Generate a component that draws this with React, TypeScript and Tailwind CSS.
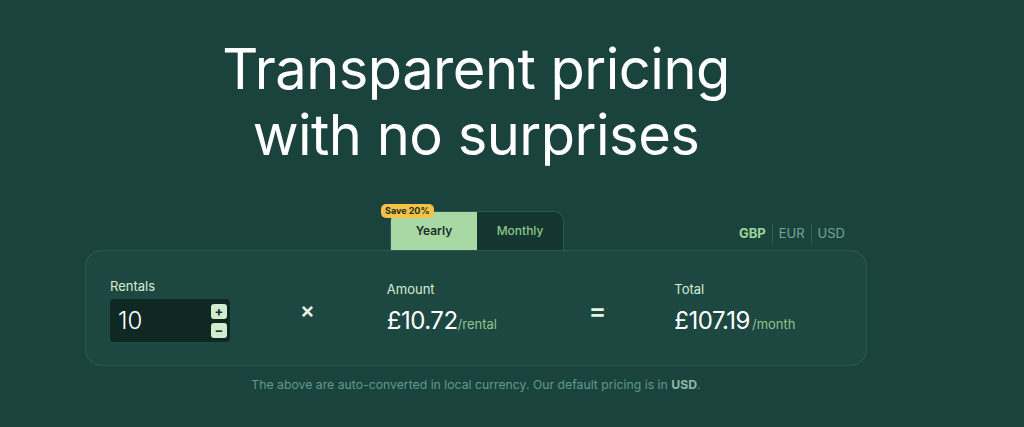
import { useState } from "react";

const currencies = ["GBP", "EUR", "USD"];

export default function App() {
  const [rentals, setRentals] = useState(10);
  const [plan, setPlan] = useState<"yearly" | "monthly">("yearly");
  const [currency, setCurrency] = useState("GBP");

  const rate = 10.72;
  const total = 107.19;

  return (
    <div
      className="min-h-[427px] w-full bg-[#1b433e] text-white"
      style={{ fontFamily: "Inter, 'Noto Sans', sans-serif" }}
    >
      <div className="flex w-[952px] flex-col items-center">
        <h1 className="pt-[36px] text-center text-[56px] font-normal leading-[66px] tracking-[-0.5px] text-white">
          Transparent pricing
          <br />
          with no surprises
        </h1>

        <div className="mt-[43px] w-[782px]">
          {/* plan toggle + currency */}
          <div className="relative flex h-[39px] items-end">
            <div className="ml-[305px] flex h-[39px] overflow-hidden rounded-t-[10px] border border-b-0 border-[#2b5a53]">
              <button
                onClick={() => setPlan("yearly")}
                className={`w-[86px] text-[12px] font-semibold ${
                  plan === "yearly" ? "bg-[#a8d8a4] text-[#1a2e2a]" : "bg-[#143631] text-[#8fc48a]"
                }`}
              >
                Yearly
              </button>
              <button
                onClick={() => setPlan("monthly")}
                className={`w-[86px] text-[12px] font-medium ${
                  plan === "monthly" ? "bg-[#a8d8a4] text-[#1a2e2a]" : "bg-[#143631] text-[#8fc48a]"
                }`}
              >
                Monthly
              </button>
            </div>
            <span className="absolute left-[296px] top-[-7px] rounded-[5px] bg-[#f4c244] px-[4px] py-[1px] text-[9px] font-bold leading-[12px] text-[#1a2e2a]">
              Save 20%
            </span>
            <div className="ml-auto mr-[16px] mt-[7px] flex items-center self-center text-[13px]">
              {currencies.map((c, i) => (
                <button
                  key={c}
                  onClick={() => setCurrency(c)}
                  className={`px-[6px] ${i > 0 ? "border-l border-[#2f5f57]" : ""} ${
                    currency === c ? "font-bold text-[#9fd69a]" : "text-[#6fa88f]"
                  }`}
                >
                  {c}
                </button>
              ))}
            </div>
          </div>

          {/* calculator card */}
          <div className="flex h-[116px] items-center rounded-[16px] border border-[#2b5a53] bg-[#1d4741] pl-[24px] pt-[4px]">
            <div className="flex w-[120px] flex-col">
              <span className="text-[13px] leading-[16px] text-[#d6ecd2]">Rentals</span>
              <div className="mt-[5px] flex h-[43px] items-center justify-between rounded-[4px] bg-[#0f2824] pl-[8px] pr-[3px]">
                <span className="text-[24px] font-light text-white">{rentals}</span>
                <div className="flex flex-col gap-[4px]">
                  <button
                    onClick={() => setRentals(rentals + 1)}
                    className="flex h-[15px] w-[16px] items-center justify-center rounded-[3px] bg-[#cfeccc] text-[13px] font-bold leading-none text-[#1a2e2a]"
                  >
                    +
                  </button>
                  <button
                    onClick={() => setRentals(Math.max(1, rentals - 1))}
                    className="flex h-[15px] w-[16px] items-center justify-center rounded-[3px] bg-[#cfeccc] text-[13px] font-bold leading-none text-[#1a2e2a]"
                  >
                    −
                  </button>
                </div>
              </div>
            </div>

            <span className="ml-[70px] text-[22px] font-semibold text-[#e6f3e2]">×</span>

            <div className="ml-[72px] flex w-[190px] flex-col">
              <span className="text-[13px] leading-[16px] text-[#d6ecd2]">Amount</span>
              <div className="mt-[6px] flex items-baseline">
                <span className="text-[24px] tracking-[-0.5px] text-white">£{rate.toFixed(2)}</span>
                <span className="text-[13px] text-[#8fc48a]">/rental</span>
              </div>
            </div>

            <span className="ml-[12px] text-[26px] font-semibold text-[#e6f3e2]">=</span>

            <div className="ml-[68px] flex flex-col">
              <span className="text-[13px] leading-[16px] text-[#d6ecd2]">Total</span>
              <div className="mt-[6px] flex items-baseline">
                <span className="text-[24px] tracking-[-0.5px] text-white">£{total.toFixed(2)}</span>
                <span className="ml-[2px] text-[13px] text-[#8fc48a]">/month</span>
              </div>
            </div>
          </div>

          <p className="mt-[10px] text-center text-[12.25px] text-[#5f9a8a]">
            The above are auto-converted in local currency. Our default pricing is in{" "}
            <span className="font-bold text-[#8ab8a8]">USD</span>.
          </p>
        </div>
      </div>
    </div>
  );
}
